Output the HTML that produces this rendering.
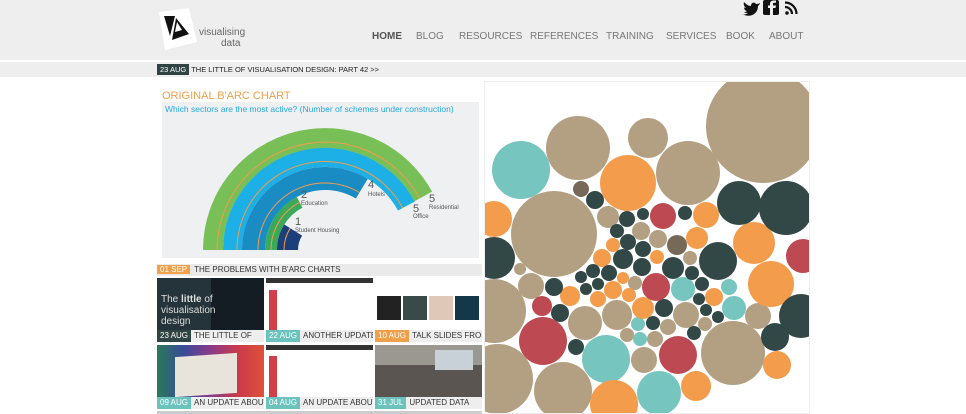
<!DOCTYPE html>
<html><head><meta charset="utf-8"><style>
*{margin:0;padding:0;box-sizing:border-box}
body{width:966px;height:414px;overflow:hidden;background:#fff;font-family:"Liberation Sans",sans-serif;position:relative}
.a{position:absolute}
#hdr{left:0;top:0;width:966px;height:60px;background:#eeeeee}
.nav{position:absolute;top:31px;font-size:10px;color:#777}
#tick{left:0;top:62px;width:966px;height:15px;background:#eeeeee}
.tag{display:inline-block;color:#fff;font-size:7.5px;padding:0 3px;line-height:11px}
.lbl{position:absolute;font-size:8px;color:#333;white-space:nowrap;background:#eee;height:12px;line-height:12px;overflow:hidden}
.lbl span{display:inline-block;color:#fff;padding:0 3px;margin-right:3px;font-size:8px}
</style></head><body>
<div id="hdr" class="a"></div>
<svg class="a" style="left:155px;top:6px" width="45" height="45" viewBox="0 0 45 45">
<polygon points="4,6 34,2 42,36 10,44" fill="#fff"/>
<polygon points="9,10 20,10 15,30" fill="#111"/>
<polygon points="21,12 34,28 17,34" fill="#111"/>
<polygon points="22,16 27,24 20,26" fill="#fff"/>
</svg>
<div class="a" style="left:199px;top:27px;font-size:10px;color:#666;line-height:11px">visualising<br><span style="padding-left:22px">data</span></div>
<div class="nav" style="left:372px;font-weight:bold;color:#555">HOME</div>
<div class="nav" style="left:416px">BLOG</div>
<div class="nav" style="left:459px">RESOURCES</div>
<div class="nav" style="left:530px">REFERENCES</div>
<div class="nav" style="left:606px">TRAINING</div>
<div class="nav" style="left:666px">SERVICES</div>
<div class="nav" style="left:726px">BOOK</div>
<div class="nav" style="left:769px">ABOUT</div>
<svg class="a" style="left:742px;top:0" width="60" height="16" viewBox="0 0 60 16">
<path d="M17,2 C15,3 14,3 13,3 C12,1 8,1 8,5 C5,5 3,3 1,1 C0,4 2,6 3,7 C2,7 2,7 1,6 C1,9 3,10 4,10 C3,11 2,11 1,11 C2,12 4,12 5,12 C2,14 0,14 -1,13 C6,17 15,14 15,5 C16,4 17,3 17,2Z" fill="#111" transform="translate(1,1)"/>
<rect x="21" y="0" width="16" height="15" rx="2" fill="#111"/>
<path d="M31,15 V8 H33.5 L34,5.5 H31 V4 C31,3 31.5,2.8 32.5,2.8 H34 V0.5 H31.5 C29,0.5 28,2 28,4 V5.5 H26 V8 H28 V15Z" fill="#eee"/>
<circle cx="45" cy="13" r="1.8" fill="#111"/>
<path d="M43,7 A7,7 0 0 1 50,14" stroke="#111" stroke-width="2.2" fill="none"/>
<path d="M43,2.5 A11.5,11.5 0 0 1 54.5,14" stroke="#111" stroke-width="2.2" fill="none"/>
</svg>
<div class="a" style="left:0;top:60px;width:966px;height:2px;background:#fff"></div>
<div id="tick" class="a"></div>
<div class="a" style="left:157px;top:64px;font-size:7.5px;color:#222;white-space:nowrap"><span class="tag" style="background:#2f4443">23 AUG</span> THE LITTLE OF VISUALISATION DESIGN: PART 42 &gt;&gt;</div>

<div class="a" style="left:162px;top:90px;font-size:11px;color:#f0a04b">ORIGINAL B'ARC CHART</div>
<div class="a" style="left:162px;top:102px;width:317px;height:156px;background:#eef0f1"></div>
<div class="a" style="left:165px;top:104px;font-size:8.5px;color:#29a9e0;white-space:nowrap">Which sectors are the most active? (Number of schemes under construction)</div>
<svg class="a" style="left:0;top:0" width="966" height="414">
<g fill="none">
<path d="M213,250 A112,112 0 0 1 423.3,196.4" stroke="#78bf57" stroke-width="20"/>
<path d="M217,250 A108,108 0 0 1 419.8,198.4" stroke="#f39c4b" stroke-width="1"/>
<path d="M232.5,250 A92.5,92.5 0 0 1 406.4,206" stroke="#1cb0e6" stroke-width="19"/>
<path d="M237,250 A88,88 0 0 1 402.6,208" stroke="#f39c4b" stroke-width="1"/>
<path d="M253.5,250 A71.5,71.5 0 0 1 361.8,188.7" stroke="#1a8cc4" stroke-width="23"/>
<path d="M258,250 A67,67 0 0 1 359.5,192.6" stroke="#f39c4b" stroke-width="1"/>
<path d="M271,250 A54,54 0 0 1 299.6,202.3" stroke="#3aaa5a" stroke-width="12"/>
<path d="M271,250 A54,54 0 0 1 299.6,202.3" stroke="#f39c4b" stroke-width="1"/>
<path d="M287.5,250 A37.5,37.5 0 0 1 293.2,230.1" stroke="#1c3e7a" stroke-width="21"/>
<path d="M284,250 A41,41 0 0 1 290.2,228.2" stroke="#f39c4b" stroke-width="1"/>
</g>
<g font-family="Liberation Sans,sans-serif" fill="#555">
<text x="295" y="225" font-size="11">1</text><text x="295" y="232" font-size="6">Student Housing</text>
<text x="301" y="198" font-size="11">2</text><text x="301" y="205" font-size="6">Education</text>
<text x="368" y="188" font-size="11">4</text><text x="368" y="196" font-size="6">Hotels</text>
<text x="413" y="212" font-size="11">5</text><text x="413" y="218" font-size="6">Office</text>
<text x="429" y="202" font-size="11">5</text><text x="429" y="209" font-size="6">Residential</text>
</g>
</svg>

<div class="a" style="left:157px;top:264px;width:325px;height:12px;background:#eaeaea;font-size:8px;color:#333;line-height:12px;white-space:nowrap"><span style="background:#f0a04b;color:#fff;padding:0 3px;margin-right:4px">01 SEP</span>THE PROBLEMS WITH B'ARC CHARTS</div>

<div class="a" style="left:157px;top:278px;width:107px;height:52px;background:#24343a"></div>
<div class="a" style="left:211px;top:278px;width:53px;height:52px;background:#141c24"></div>
<div class="a" style="left:161px;top:294px;font-size:10px;color:#ddd;line-height:11px">The <b>little</b> of<br>visualisation<br>design</div>
<div class="a" style="left:266px;top:278px;width:107px;height:52px;background:#fff"></div>
<div class="a" style="left:266px;top:278px;width:107px;height:5px;background:#333"></div>
<div class="a" style="left:269px;top:290px;width:8px;height:40px;background:#d0404a"></div>
<div class="a" style="left:375px;top:278px;width:107px;height:52px;background:#fff"></div>
<div class="a" style="left:377px;top:296px;width:24px;height:24px;background:#222"></div>
<div class="a" style="left:403px;top:296px;width:24px;height:24px;background:#3a4a48"></div>
<div class="a" style="left:429px;top:296px;width:24px;height:24px;background:#e0c8b8"></div>
<div class="a" style="left:455px;top:296px;width:24px;height:24px;background:#153848"></div>
<div class="lbl" style="left:157px;top:330px;width:107px"><span style="background:#2f4443">23 AUG</span>THE LITTLE OF</div>
<div class="lbl" style="left:266px;top:330px;width:107px"><span style="background:#6cc3bd">22 AUG</span>ANOTHER UPDATE</div>
<div class="lbl" style="left:375px;top:330px;width:107px"><span style="background:#f0a04b">10 AUG</span>TALK SLIDES FROM</div>
<div class="a" style="left:157px;top:345px;width:107px;height:52px;background:linear-gradient(90deg,#2a7a5a,#3a4a9a,#8a3a8a,#c83a4a,#e0503a)"></div>
<div class="a" style="left:175px;top:355px;width:62px;height:40px;background:#e8e4dc;transform:skewY(-4deg)"></div>
<div class="a" style="left:266px;top:345px;width:107px;height:52px;background:#fff"></div>
<div class="a" style="left:266px;top:345px;width:107px;height:5px;background:#333"></div>
<div class="a" style="left:269px;top:356px;width:8px;height:41px;background:#d0404a"></div>
<div class="a" style="left:375px;top:345px;width:107px;height:52px;background:#5a5550"></div>
<div class="a" style="left:375px;top:345px;width:107px;height:20px;background:#9a9890"></div>
<div class="a" style="left:435px;top:350px;width:38px;height:20px;background:#c8d0d8"></div>
<div class="lbl" style="left:157px;top:397px;width:107px"><span style="background:#6cc3bd">09 AUG</span>AN UPDATE ABOUT</div>
<div class="lbl" style="left:266px;top:397px;width:107px"><span style="background:#6cc3bd">04 AUG</span>AN UPDATE ABOUT</div>
<div class="lbl" style="left:375px;top:397px;width:107px"><span style="background:#6cc3bd">31 JUL</span>UPDATED DATA</div>
<div class="a" style="left:157px;top:411px;width:325px;height:3px;background:#ccc"></div>

<div class="a" style="left:484px;top:81px;width:326px;height:333px;border:1px solid #eee;overflow:hidden">
<svg width="326" height="333" viewBox="484 81 326 333" style="display:block">
<g fill="#b3a083"><circle cx="762" cy="125" r="57"/><circle cx="577" cy="147" r="32"/><circle cx="647" cy="137" r="20"/><circle cx="687" cy="172" r="32"/><circle cx="553" cy="233" r="43"/><circle cx="757" cy="315" r="13"/><circle cx="732" cy="352" r="32"/><circle cx="493" cy="310" r="32"/><circle cx="497" cy="378" r="35"/><circle cx="562" cy="390" r="29"/><circle cx="643" cy="359" r="13"/><circle cx="584" cy="322" r="17"/><circle cx="616" cy="314" r="15"/><circle cx="530" cy="285" r="13"/><circle cx="519" cy="268" r="6"/><circle cx="685" cy="314" r="13"/><circle cx="607" cy="216" r="11"/><circle cx="640" cy="230" r="9"/><circle cx="657" cy="238" r="9"/><circle cx="689" cy="257" r="7"/><circle cx="634" cy="282" r="7"/><circle cx="704" cy="323" r="7"/><circle cx="667" cy="326" r="8"/><circle cx="626" cy="334" r="7"/><circle cx="654" cy="338" r="8"/></g>
<g fill="#76c5bf"><circle cx="520" cy="169" r="29"/><circle cx="605" cy="358" r="24"/><circle cx="658" cy="392" r="22"/><circle cx="682" cy="288" r="12"/><circle cx="728" cy="286" r="8"/><circle cx="733" cy="307" r="12"/><circle cx="637" cy="323" r="7"/><circle cx="639" cy="338" r="7"/></g>
<g fill="#f39c4b"><circle cx="627" cy="182" r="28"/><circle cx="493" cy="218" r="18"/><circle cx="753" cy="242" r="21"/><circle cx="770" cy="283" r="23"/><circle cx="776" cy="364" r="14"/><circle cx="613" cy="403" r="24"/><circle cx="695" cy="385" r="15"/><circle cx="569" cy="295" r="10"/><circle cx="642" cy="307" r="11"/><circle cx="705" cy="214" r="13"/><circle cx="696" cy="237" r="11"/><circle cx="612" cy="244" r="7"/><circle cx="601" cy="257" r="9"/><circle cx="656" cy="256" r="7"/><circle cx="622" cy="277" r="6"/><circle cx="612" cy="289" r="9"/><circle cx="628" cy="294" r="7"/><circle cx="597" cy="298" r="8"/><circle cx="713" cy="296" r="9"/></g>
<g fill="#324846"><circle cx="594" cy="199" r="9"/><circle cx="493" cy="257" r="21"/><circle cx="738" cy="202" r="22"/><circle cx="785" cy="207" r="27"/><circle cx="717" cy="260" r="19"/><circle cx="800" cy="315" r="22"/><circle cx="774" cy="336" r="14"/><circle cx="559" cy="312" r="9"/><circle cx="553" cy="286" r="9"/><circle cx="663" cy="307" r="9"/><circle cx="575" cy="346" r="8"/><circle cx="626" cy="218" r="8"/><circle cx="642" cy="213" r="6"/><circle cx="684" cy="212" r="7"/><circle cx="616" cy="230" r="7"/><circle cx="627" cy="241" r="8"/><circle cx="642" cy="248" r="8"/><circle cx="622" cy="258" r="10"/><circle cx="641" cy="266" r="9"/><circle cx="672" cy="267" r="11"/><circle cx="691" cy="272" r="7"/><circle cx="608" cy="272" r="8"/><circle cx="592" cy="270" r="7"/><circle cx="580" cy="276" r="6"/><circle cx="597" cy="283" r="6"/><circle cx="585" cy="288" r="6"/><circle cx="701" cy="283" r="7"/><circle cx="698" cy="298" r="6"/><circle cx="705" cy="309" r="6"/><circle cx="717" cy="316" r="6"/><circle cx="693" cy="332" r="7"/><circle cx="652" cy="322" r="7"/></g>
<g fill="#bd4a52"><circle cx="802" cy="255" r="17"/><circle cx="542" cy="340" r="24"/><circle cx="677" cy="354" r="19"/><circle cx="541" cy="305" r="10"/><circle cx="655" cy="286" r="14"/><circle cx="662" cy="215" r="13"/></g>
<g fill="#776957"><circle cx="580" cy="188" r="8"/><circle cx="676" cy="244" r="10"/></g>
</svg></div>
</body></html>
